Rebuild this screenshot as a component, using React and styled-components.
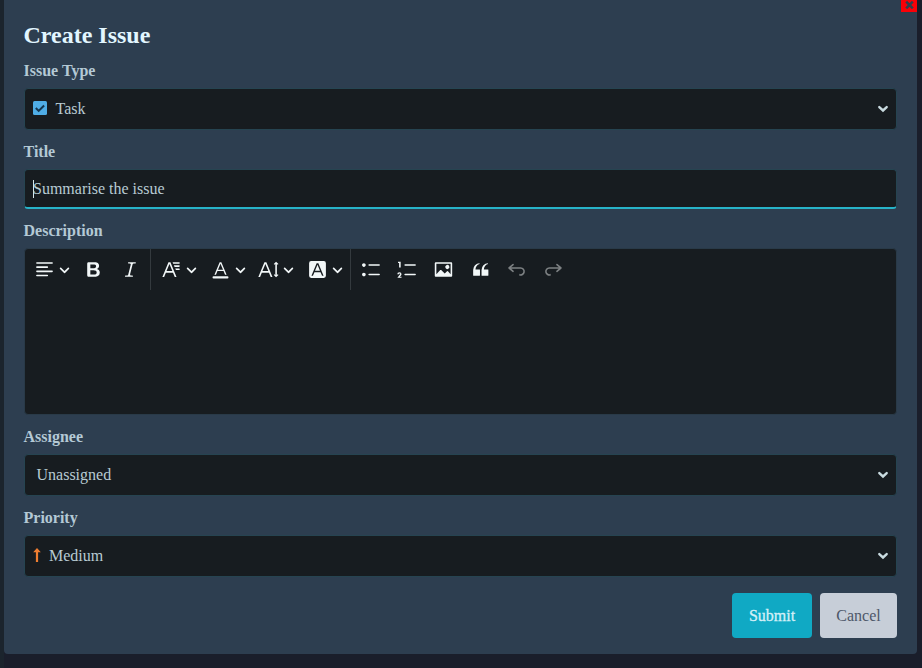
import React from "react";
import styled, { createGlobalStyle } from "styled-components";

const GlobalStyle = createGlobalStyle`
  * { box-sizing: border-box; }
  body {
    margin: 0;
    background: #1a1e2b;
    font-family: "Liberation Serif", "Times New Roman", serif;
    font-size: 16px;
    overflow: hidden;
  }
`;

const Page = styled.div`
  height: 668px;
  padding: 0 5px 14px 4px;
  background: linear-gradient(to right, #1b242d 0 4px, #1a1e2b 4px);
`;

const Modal = styled.form`
  position: relative;
  height: 654px;
  padding: 20px 20px 0;
  background: #2d3e50;
  border-radius: 0 0 4px 4px;
`;

const CloseButton = styled.button`
  position: absolute;
  top: 0;
  right: 0;
  display: flex;
  width: 16px;
  height: 12px;
  padding: 0 0 0 4px;
  border: 0;
  background: #fb0007;
  color: #30404f;
`;

const Heading = styled.h1`
  margin: 0 0 0 -0.5px;
  height: 41px;
  line-height: 30px;
  font-size: 24px;
  color: #e2f6ff;
`;

const Field = styled.div`
  margin-bottom: ${(p) => p.$gap}px;
`;

const Label = styled.label`
  display: block;
  height: 27px;
  margin-left: -0.5px;
  line-height: 20px;
  font-weight: bold;
  color: #b4c9d5;
`;

const Control = styled.div`
  display: flex;
  align-items: center;
  height: ${(p) => p.$height || 42}px;
  padding: 0 7px ${(p) => (p.$focused ? 0 : 1)}px ${(p) => p.$inset || 8}px;
  border: 1px solid #264451;
  border-bottom: ${(p) => (p.$focused ? "2px solid #27b3c8" : "1px solid #264451")};
  border-radius: 4px;
  background: #171c20;
  color: #b7cbd3;
`;

const Value = styled.span`
  flex: 1;
  padding-left: ${(p) => p.$indent || 0}px;
`;

const Caret = styled.span`
  width: 1px;
  height: 18px;
  margin-right: -1px;
  background: #d5e6ec;
`;

const Editor = styled.div`
  height: 167px;
  border: 1px solid #293a48;
  border-radius: 4px;
  background: #171c20;
`;

const Toolbar = styled.div`
  display: flex;
  height: 41px;
  color: #f2f7f8;
`;

const Group = styled.div`
  display: flex;
  align-items: center;
  width: ${(p) => p.$width}px;
  padding-left: ${(p) => p.$start}px;
  border-right: ${(p) => (p.$last ? "0" : "1px solid #343a3e")};
`;

const Tool = styled.button`
  display: flex;
  align-items: center;
  flex: none;
  width: ${(p) => p.$width}px;
  height: 21px;
  margin-bottom: 1px;
  padding: 0;
  border: 0;
  background: none;
  color: ${(p) => (p.$disabled ? "#7d8183" : "inherit")};
`;

const Glyph = styled.svg`
  display: block;
  flex: none;
  width: ${(p) => p.$w || 21}px;
  height: ${(p) => p.$h || p.$w || 21}px;
  margin-left: ${(p) => p.$ml || 0}px;
  margin-bottom: ${(p) => p.$lift || 0}px;
  fill: currentColor;
`;

const Actions = styled.div`
  display: flex;
  justify-content: flex-end;
  gap: 8px;
`;

const Button = styled.button`
  width: ${(p) => p.$width}px;
  height: 45px;
  padding: 1px 0 0;
  border: 0;
  border-radius: 4px;
  background: ${(p) => (p.$primary ? "#10a9c4" : "#c7ced8")};
  color: ${(p) => (p.$primary ? "#d5f0f8" : "#4d5769")};
  font: 16px "Liberation Serif", serif;
  -webkit-text-stroke: ${(p) => (p.$primary ? "0.3px" : "0")};
`;

const paths = {
  align: "M2 3.75c0 .414.336.75.75.75h14.5a.75.75 0 1 0 0-1.5H2.75a.75.75 0 0 0-.75.75zm0 8c0 .414.336.75.75.75h14.5a.75.75 0 1 0 0-1.5H2.75a.75.75 0 0 0-.75.75zm0 4c0 .414.336.75.75.75h9.929a.75.75 0 1 0 0-1.5H2.75a.75.75 0 0 0-.75.75zm0-8c0 .414.336.75.75.75h9.929a.75.75 0 1 0 0-1.5H2.75a.75.75 0 0 0-.75.75z",
  bold: "M10.187 17H5.773c-.637 0-1.092-.138-1.364-.415-.273-.277-.409-.718-.409-1.323V4.738c0-.617.14-1.062.419-1.332.279-.27.73-.406 1.354-.406h4.68c.69 0 1.288.041 1.793.124.506.083.96.242 1.36.478.341.197.644.447.906.75a3.262 3.262 0 0 1 .808 2.162c0 1.401-.722 2.426-2.167 3.075C15.05 10.175 16 11.315 16 13.01a3.756 3.756 0 0 1-2.296 3.504 6.1 6.1 0 0 1-1.517.377c-.571.073-1.238.11-2 .11zm-.217-6.217H7v4.087h3.069c1.977 0 2.965-.69 2.965-2.072 0-.707-.256-1.22-.768-1.537-.512-.319-1.277-.478-2.296-.478zM7 5.13v3.619h2.606c.729 0 1.292-.067 1.69-.2a1.6 1.6 0 0 0 .91-.765c.165-.267.247-.566.247-.897 0-.707-.26-1.176-.778-1.409-.519-.232-1.31-.348-2.375-.348H7z",
  italic: "m9.586 14.633.021.004c-.036.335.095.655.393.962.082.083.173.15.274.201h1.474a.6.6 0 1 1 0 1.2H5.304a.6.6 0 0 1 0-1.2h1.15c.474-.07.809-.182 1.005-.334.157-.122.291-.32.404-.597l2.416-9.55a1.053 1.053 0 0 0-.281-.823 1.12 1.12 0 0 0-.442-.296H8.15a.6.6 0 0 1 0-1.2h6.443a.6.6 0 1 1 0 1.2h-1.195c-.376.056-.65.155-.823.296-.215.175-.423.439-.623.79l-2.366 9.347z",
  family: "M11.03 3h6.149a.75.75 0 1 1 0 1.5h-5.514L11.03 3zm1.27 3h4.879a.75.75 0 1 1 0 1.5h-4.244L12.3 6zm1.27 3h3.609a.75.75 0 1 1 0 1.5h-2.973L13.57 9zm-2.754 2.5L8.038 4.785 5.261 11.5h5.555zm.62 1.5H4.641l-1.666 4.028H1.312l5.789-14h1.875l5.789 14h-1.663L11.436 13z",
  color: "M12.4 10.3 10 4.5l-2.4 5.8h4.8zm.5 1.2H7.1L5.7 15H4.2l5-12h1.6l5 12h-1.5L12.9 11.5zm3.7 7H3.4a1 1 0 0 1 0-2h13.2a1 1 0 0 1 0 2z",
  size: "M9.816 11.5 7.038 4.785 4.261 11.5h5.555zm.62 1.5H3.641l-1.666 4.028H.312l5.789-14h1.875l5.789 14h-1.663L10.436 13zm7.55 2.279.779-.779.707.707-2.265 2.265-2.193-2.265.707-.707.765.765V4.825c0-.042 0-.083.002-.123l-.77.77-.707-.707L17.207 2.5l2.265 2.265-.707.707-.782-.782c.002.043.003.089.003.135v10.454z",
  background: "M4 2h12a2 2 0 0 1 2 2v12a2 2 0 0 1-2 2H4a2 2 0 0 1-2-2V4a2 2 0 0 1 2-2zm8.38 9.262H7.62L10 5.506l2.38 5.756zm.532 1.285L14.34 16h1.426L10.804 4H9.196L4.234 16H5.66l1.428-3.453h5.824z",
  bullets: "M7 5.75c0 .414.336.75.75.75h9.5a.75.75 0 1 0 0-1.5h-9.5a.75.75 0 0 0-.75.75zm-6 0C1 4.784 1.777 4 2.75 4c.966 0 1.75.777 1.75 1.75 0 .966-.777 1.75-1.75 1.75C1.784 7.5 1 6.723 1 5.75zm6 9c0 .414.336.75.75.75h9.5a.75.75 0 1 0 0-1.5h-9.5a.75.75 0 0 0-.75.75zm-6 0c0-.966.777-1.75 1.75-1.75.966 0 1.75.777 1.75 1.75 0 .966-.777 1.75-1.75 1.75-.966 0-1.75-.777-1.75-1.75z",
  numbers: "M7 5.75c0 .414.336.75.75.75h9.5a.75.75 0 1 0 0-1.5h-9.5a.75.75 0 0 0-.75.75zM3.5 3v5H2V3.7H1v-1h2.5V3zM.343 17.857l2.59-3.257H2.92a.6.6 0 1 0-1.04 0H.302a2 2 0 1 1 3.995 0h-.001c-.048.405-.16.734-.333.988-.175.254-.59.692-1.244 1.312H4.3v1h-4l.043-.043zM7 14.75a.75.75 0 0 1 .75-.75h9.5a.75.75 0 1 1 0 1.5h-9.5a.75.75 0 0 1-.75-.75z",
  image: "M6.91 10.54c.26-.23.64-.21.88.03l3.36 3.14 2.23-2.06a.64.64 0 0 1 .87 0l2.52 2.97V4.5H3.2v10.12l3.71-4.08zm10.27-7.51c.6 0 1.09.47 1.09 1.05v11.84c0 .59-.49 1.06-1.09 1.06H2.79c-.6 0-1.09-.47-1.09-1.06V4.08c0-.58.49-1.05 1.1-1.05h14.38zm-5.22 5.56a1.96 1.96 0 1 1 3.4-1.96 1.96 1.96 0 0 1-3.4 1.96z",
  quote: "M3 10.423a6.5 6.5 0 0 1 6.056-6.408l.038.67C6.448 5.423 5.354 7.663 5.22 10H9c.552 0 .5.432.5.986v4.511c0 .554-.448.503-1 .503h-5c-.552 0-.5-.449-.5-1.003v-4.574zm8 0a6.5 6.5 0 0 1 6.056-6.408l.038.67c-2.646.739-3.74 2.979-3.873 5.315H17c.552 0 .5.432.5.986v4.511c0 .554-.448.503-1 .503h-5c-.552 0-.5-.449-.5-1.003v-4.574z",
  undo: "m5.042 9.367 2.189 1.837a.75.75 0 0 1-.965 1.149l-3.788-3.18a.747.747 0 0 1-.21-.284.75.75 0 0 1 .17-.945L6.23 4.762a.75.75 0 1 1 .964 1.15L4.863 7.866h8.917A.75.75 0 0 1 14 7.9a4 4 0 1 1-1.477 7.718l.344-1.489a2.5 2.5 0 1 0 1.094-4.73l.008-.032H5.042z",
  redo: "m14.958 9.367-2.189 1.837a.75.75 0 0 0 .965 1.149l3.788-3.18a.747.747 0 0 0 .21-.284.75.75 0 0 0-.17-.945L13.77 4.762a.75.75 0 1 0-.964 1.15l2.331 1.955H6.22A.75.75 0 0 0 6 7.9a4 4 0 1 0 1.477 7.718l-.344-1.489A2.5 2.5 0 1 1 6.039 9.4l-.008-.032h8.927z",
};

const EditorTool = ({ name, width, menu, disabled }) => (
  <Tool type="button" aria-label={name} $width={width} $disabled={disabled}>
    <Glyph viewBox="0 0 20 20">
      <path fillRule="evenodd" d={paths[name]} />
    </Glyph>
    {menu && (
      <Glyph viewBox="0 0 10 10" $w={11} $ml={4}>
        <path d="M.941 4.523a.75.75 0 1 1 1.06-1.06l3.006 3.005 3.005-3.005a.75.75 0 1 1 1.06 1.06l-3.549 3.55a.75.75 0 0 1-1.168-.136L.941 4.523z" />
      </Glyph>
    )}
  </Tool>
);

const SelectArrow = () => (
  <Glyph viewBox="0 0 12 8" $w={12} $h={8} aria-hidden="true">
    <path d="M2.3 2.1l3.7 3.4L9.7 2.1" fill="none" stroke="#c9dbe0" strokeWidth="2.4" strokeLinecap="round" />
  </Glyph>
);

export default function App() {
  return (
    <Page>
      <GlobalStyle />
      <Modal>
        <CloseButton type="button" aria-label="Close">
          <Glyph viewBox="0 0 9 9" $w={9}>
            <path d="M1.2 1.7l6.6 6.6M7.8 1.7L1.2 8.3" stroke="currentColor" strokeWidth="2.6" />
          </Glyph>
        </CloseButton>
        <Heading>Create Issue</Heading>
        <Field $gap={12}>
          <Label>Issue Type</Label>
          <Control>
            <Glyph viewBox="0 0 14 14" $w={14} $lift={2}>
              <rect width="14" height="14" rx="1.5" fill="#4fade6" />
              <path d="M2.8 7l2.9 2.9 5.4-5.4" fill="none" stroke="#14364f" strokeWidth="2" />
            </Glyph>
            <Value $indent={8.5}>Task</Value>
            <SelectArrow />
          </Control>
        </Field>
        <Field $gap={12}>
          <Label>Title</Label>
          <Control $height={40} $focused>
            <Caret />
            <Value>Summarise the issue</Value>
          </Control>
        </Field>
        <Field $gap={12}>
          <Label>Description</Label>
          <Editor>
            <Toolbar>
              <Group $width={126} $start={9}>
                <EditorTool name="align" width={49} menu />
                <EditorTool name="bold" width={36.5} />
                <EditorTool name="italic" width={21} />
              </Group>
              <Group $width={200} $start={10}>
                <EditorTool name="family" width={48.5} menu />
                <EditorTool name="color" width={48.5} menu />
                <EditorTool name="size" width={49} menu />
                <EditorTool name="background" width={36} menu />
              </Group>
              <Group $width={240} $start={10} $last>
                <EditorTool name="bullets" width={36} />
                <EditorTool name="numbers" width={36} />
                <EditorTool name="image" width={37} />
                <EditorTool name="quote" width={36} />
                <EditorTool name="undo" width={36.5} disabled />
                <EditorTool name="redo" width={21} disabled />
              </Group>
            </Toolbar>
          </Editor>
        </Field>
        <Field $gap={12}>
          <Label>Assignee</Label>
          <Control $inset={11.5}>
            <Value>Unassigned</Value>
            <SelectArrow />
          </Control>
        </Field>
        <Field $gap={16}>
          <Label>Priority</Label>
          <Control>
            <Glyph viewBox="0 0 8 14" $w={8} $h={14} $lift={2}>
              <path d="M4 0l3.8 4.2H5.1V14H2.9V4.2H.2z" fill="#ee7d31" />
            </Glyph>
            <Value $indent={8}>Medium</Value>
            <SelectArrow />
          </Control>
        </Field>
        <Actions>
          <Button type="button" $primary $width={80}>Submit</Button>
          <Button type="button" $width={77}>Cancel</Button>
        </Actions>
      </Modal>
    </Page>
  );
}
